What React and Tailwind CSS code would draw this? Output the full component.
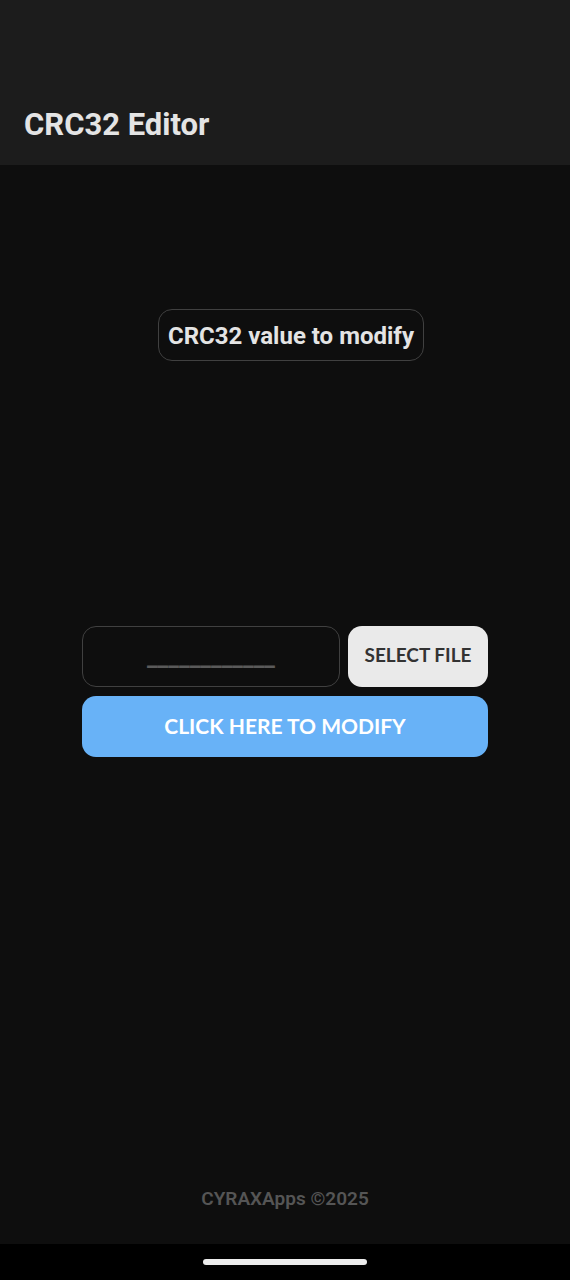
import { useState } from 'react'

const CRC_LENGTH = 12

function ModifyForm() {
  const [value, setValue] = useState('')

  return (
    <form
      onSubmit={(e) => e.preventDefault()}
      className="w-full max-w-[406px] flex flex-col gap-[9px]"
    >
      <div className="flex gap-2">
        <input
          id="crc-value"
          type="text"
          value={value}
          maxLength={CRC_LENGTH}
          onChange={(e) => setValue(e.target.value)}
          placeholder="____________"
          className="flex-1 min-w-0 h-[61px] rounded-[14px] border border-[#404040] bg-transparent text-center text-2xl font-bold text-[#e4e4e4] placeholder:text-[#5a5a5a] outline-none"
        />
        <button
          type="button"
          className="w-[140px] h-[61px] rounded-[14px] bg-[#eaeaea] pb-0.5 font-[Lato,sans-serif] text-[19px] font-bold text-[#333333]"
        >
          SELECT FILE
        </button>
      </div>
      <button
        type="submit"
        className="h-[61px] rounded-[14px] bg-[#68b2f7] pb-0.5 font-[Lato,sans-serif] text-[21px] font-bold text-white"
      >
        CLICK HERE TO MODIFY
      </button>
    </form>
  )
}

export default function App() {
  return (
    <div className="min-h-screen flex flex-col bg-[#0e0e0e] font-[Roboto,sans-serif] text-[#e4e4e4]">
      <header className="bg-[#1c1c1c] px-6 pt-[105px] pb-5">
        <h1 className="text-[31px] leading-10 font-bold">CRC32 Editor</h1>
      </header>

      <main className="flex-1 flex flex-col items-center px-6 pt-36">
        <label
          htmlFor="crc-value"
          className="ml-3 mb-[265px] rounded-[14px] border border-[#404040] px-[9px] pt-[10px] pb-2 text-2xl leading-8 font-bold"
        >
          CRC32 value to modify
        </label>
        <ModifyForm />
      </main>

      <footer>
        <p className="pb-[33px] text-center text-[19px] leading-6 font-semibold text-[#555555]">
          CYRAXApps ©2025
        </p>
        <div className="h-9 flex items-center justify-center bg-black">
          <div className="w-[164px] h-1.5 rounded-full bg-[#ececec]" />
        </div>
      </footer>
    </div>
  )
}
